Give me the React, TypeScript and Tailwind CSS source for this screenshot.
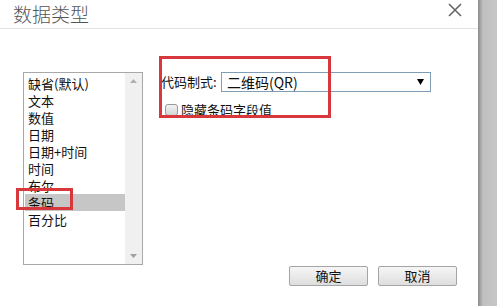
import React from "react";

const items = ["缺省(默认)", "文本", "数值", "日期", "日期+时间", "时间", "布尔", "条码", "百分比"];

const font = { fontFamily: '"Noto Sans CJK SC", "Liberation Sans", sans-serif' };

const App = () => {
  return (
    <div className="flex w-[497px] h-[306px] overflow-hidden bg-white" style={font}>
      {/* Dialog */}
      <div className="w-[478px] h-full bg-white flex flex-col">
        {/* Header */}
        <div className="h-[29px] shrink-0 border-b border-[#e3e3e3] flex items-start justify-between pl-[13px] pr-[16px]">
          <span className="text-[19px] leading-[27px] text-[#555] font-light">数据类型</span>
          <svg width="14" height="14" viewBox="0 0 14 14" className="mt-[3px]">
            <path d="M1 1 L13 13 M13 1 L1 13" stroke="#666" strokeWidth="1.6" />
          </svg>
        </div>

        {/* Body */}
        <div className="relative flex-1 flex pl-[23px] pt-[43px]">
          {/* List box */}
          <div className="w-[120px] h-[193px] border border-[#a8a8a8] flex">
            <div className="flex-1 pt-[2px] pl-[1px]">
              {items.map((it) => (
                <div
                  key={it}
                  className={`h-[17px] leading-[17px] text-[13px] pl-[3px] text-[#111] ${
                    it === "条码" ? "bg-[#c6c6c6]" : ""
                  }`}
                >
                  {it}
                </div>
              ))}
            </div>
            <div className="w-[17px] bg-[#f0f0f0] flex flex-col items-center justify-between py-[6px]">
              <svg width="7" height="4" viewBox="0 0 7 4">
                <path d="M0 4 L3.5 0 L7 4 Z" fill="#b0b0b0" />
              </svg>
              <svg width="7" height="4" viewBox="0 0 7 4">
                <path d="M0 0 L3.5 4 L7 0 Z" fill="#a0a0a0" />
              </svg>
            </div>
          </div>

          {/* Right panel */}
          <div className="ml-[18px] flex flex-col">
            <div className="flex items-center h-[20px]">
              <span className="w-[60px] text-[13px] text-[#111]">代码制式:</span>
              <div className="w-[210px] h-[20px] border border-[#7f9db9] flex items-center justify-between pl-[5px] pr-[6px]">
                <span className="text-[14px] leading-[18px] text-[#111]">二维码(QR)</span>
                <svg width="7" height="6" viewBox="0 0 7 6">
                  <path d="M0 0 L7 0 L3.5 6 Z" fill="#000" />
                </svg>
              </div>
            </div>
            <div className="flex items-center mt-[11px] pl-[4px]">
              <div className="w-[13px] h-[12px] rounded-[3px] border border-[#999] bg-gradient-to-b from-[#f4f4f4] to-[#d4d4d4]" />
              <span className="ml-[3px] text-[13px] leading-[14px] text-[#111]">隐藏条码字段值</span>
            </div>
          </div>

          {/* Annotation boxes */}
          <div className="absolute left-[16px] top-[159px] w-[57px] h-[22px] border-[3px] border-[#d8383c]" />
          <div className="absolute left-[159px] top-[27px] w-[172px] h-[62px] border-[3px] border-[#d8383c]" />
        </div>

        {/* Footer */}
        <div className="shrink-0 flex justify-end gap-[10px] pr-[21px] pb-[20px]">
          <button className="w-[79px] h-[20px] rounded-[2px] border border-[#a4a4a4] bg-gradient-to-b from-[#f6f6f6] to-[#dedede] text-[13px] leading-[18px] text-[#111]">
            确定
          </button>
          <button className="w-[79px] h-[20px] rounded-[2px] border border-[#a4a4a4] bg-gradient-to-b from-[#f6f6f6] to-[#dedede] text-[13px] leading-[18px] text-[#111]">
            取消
          </button>
        </div>
      </div>

      {/* Backdrop strip */}
      <div className="w-[19px] h-full bg-[linear-gradient(to_right,#8a8a8a,#c0c0c0_5px,#c6c6c6)]" />
    </div>
  );
};

export default App;
